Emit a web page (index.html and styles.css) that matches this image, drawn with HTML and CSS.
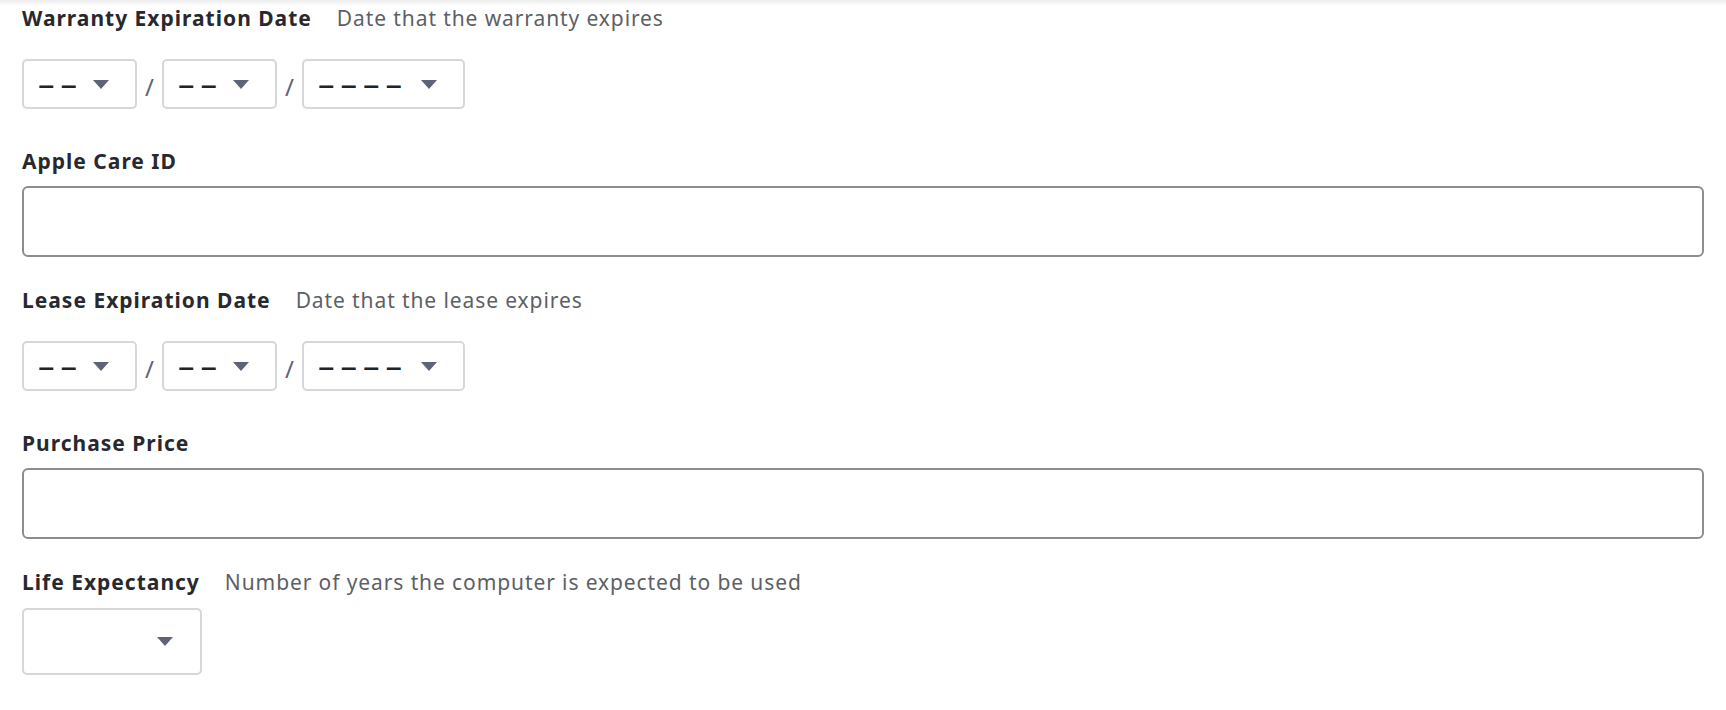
FILE: index.html
```html
<!DOCTYPE html>
<html lang="en">
<head>
<meta charset="utf-8">
<title>Purchasing</title>
<link rel="stylesheet" href="styles.css">
</head>
<body>
<div class="shade"></div>
<form class="form">
  <div class="field field-date">
    <div class="label-row">
      <span class="label">Warranty Expiration Date</span>
      <span class="desc">Date that the warranty expires</span>
    </div>
    <div class="date-row">
      <div class="select sel-sm"><span class="ph">––</span><span class="caret"></span></div>
      <span class="slash">/</span>
      <div class="select sel-sm"><span class="ph">––</span><span class="caret"></span></div>
      <span class="slash">/</span>
      <div class="select sel-lg"><span class="ph">––––</span><span class="caret"></span></div>
    </div>
  </div>

  <div class="field">
    <div class="label-row">
      <span class="label">Apple Care ID</span>
    </div>
    <div class="input"></div>
  </div>

  <div class="field field-date">
    <div class="label-row">
      <span class="label">Lease Expiration Date</span>
      <span class="desc">Date that the lease expires</span>
    </div>
    <div class="date-row">
      <div class="select sel-sm"><span class="ph">––</span><span class="caret"></span></div>
      <span class="slash">/</span>
      <div class="select sel-sm"><span class="ph">––</span><span class="caret"></span></div>
      <span class="slash">/</span>
      <div class="select sel-lg"><span class="ph">––––</span><span class="caret"></span></div>
    </div>
  </div>

  <div class="field">
    <div class="label-row">
      <span class="label">Purchase Price</span>
    </div>
    <div class="input"></div>
  </div>

  <div class="field field-life">
    <div class="label-row">
      <span class="label">Life Expectancy</span>
      <span class="desc">Number of years the computer is expected to be used</span>
    </div>
    <div class="select sel-life"><span class="ph"></span><span class="caret"></span></div>
  </div>
</form>
</body>
</html>
```
FILE: styles.css
```css
* { box-sizing: border-box; }
html, body { margin: 0; padding: 0; background: #ffffff; }
body {
  font-family: "Noto Sans", "Open Sans", sans-serif;
  font-size: 21px;
  color: #28292e;
}
.shade {
  height: 6px;
  background: linear-gradient(to bottom, rgba(0,0,0,0.07), rgba(0,0,0,0));
}
.form {
  padding: 0 22px;
  display: flex;
  flex-direction: column;
}
.field { margin-bottom: 31px; }
.field-date { margin-bottom: 40px; }
.label-row {
  display: flex;
  align-items: baseline;
  gap: 25px;
  height: 24px;
  line-height: 24px;
  margin-bottom: 13px;
  white-space: nowrap;
}
.field-life .label-row { margin-bottom: 14px; }
.label {
  font-weight: 700;
  letter-spacing: 1px;
  color: #28292e;
}
.desc {
  font-weight: 400;
  letter-spacing: 0.9px;
  color: #5d5f66;
}
.date-row {
  display: flex;
  align-items: center;
  margin-top: 29px;
}
.select {
  display: flex;
  align-items: center;
  justify-content: space-between;
  border: 2px solid #d6d7db;
  border-radius: 5px;
  background: #fff;
  padding: 0 26px 0 14px;
}
.sel-sm { width: 115px; height: 50px; }
.sel-lg { width: 163px; height: 50px; }
.sel-life { width: 180px; height: 67px; padding-right: 27px; }
.ph {
  font-size: 33px;
  line-height: 1;
  color: #222326;
  letter-spacing: 6px;
  margin-top: -2px;
}
.caret {
  width: 0;
  height: 0;
  border-left: 8px solid transparent;
  border-right: 8px solid transparent;
  border-top: 9px solid #5e6478;
}
.slash {
  width: 25px;
  text-align: center;
  font-size: 24px;
  color: #5e6478;
  padding-top: 5px;
}
.input {
  height: 71px;
  border: 2px solid #8b8d91;
  border-radius: 6px;
  background: #fff;
}
```
